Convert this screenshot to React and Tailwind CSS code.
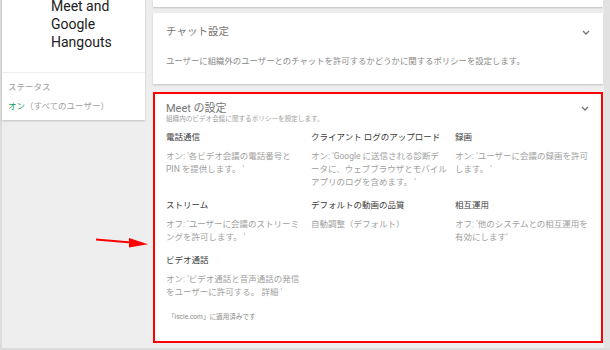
const FONT = "font-['Roboto','Noto_Sans_CJK_JP',sans-serif]";

const SETTINGS = [
  { title: "電話通信", lines: ["オン: '各ビデオ会議の電話番号と", "PIN を提供します。 '"] },
  { title: "クライアント ログのアップロード", lines: ["オン: 'Google に送信される診断デ", "ータに、ウェブブラウザとモバイル", "アプリのログを含めます。 '"] },
  { title: "録画", lines: ["オン: 'ユーザーに会議の録画を許可", "します。 '"] },
  { title: "ストリーム", lines: ["オフ: 'ユーザーに会議のストリーミ", "ングを許可します。 '"] },
  { title: "デフォルトの動画の品質", lines: ["自動調整（デフォルト）"] },
  { title: "相互運用", lines: ["オフ: '他のシステムとの相互運用を", "有効にします'"] },
  { title: "ビデオ通話", lines: ["オン: 'ビデオ通話と音声通話の発信", "をユーザーに許可する。 詳細 '"] },
];

function Chevron() {
  return (
    <svg width="8" height="5" viewBox="0 0 8 5" className="shrink-0">
      <path d="M1 1 L4 4 L7 1" fill="none" stroke="#757575" strokeWidth="1.3" />
    </svg>
  );
}

export default function App() {
  return (
    <div className={`relative w-[610px] h-[350px] overflow-hidden bg-[#eeeeee] ${FONT}`}>
      <div className="flex h-full border-l-2 border-b-2 border-[#dcdcdc]">
        {/* left info card */}
        <div className="w-[143px] shrink-0">
          <div className="-mt-[3px] bg-white shadow-[0_1px_2px_rgba(0,0,0,0.2)]">
            <div className="pl-[49px] pb-[21px] text-[14px] leading-[18px] text-[#212121]">
              <div>Meet and</div>
              <div>Google</div>
              <div>Hangouts</div>
            </div>
            <div className="border-t border-[#eeeeee] px-[6px] pt-[8px] pb-[8px] text-[8.5px] leading-[12px]">
              <div className="text-[#9e9e9e]">ステータス</div>
              <div className="mt-[7px] text-[#9e9e9e]">
                <span className="text-[#0f9d58]">オン</span>（すべてのユーザー）
              </div>
            </div>
          </div>
        </div>

        {/* right column */}
        <div className="ml-[8px] w-[450px] shrink-0 flex flex-col">
          <div className="h-[7px] bg-white shadow-[0_1px_2px_rgba(0,0,0,0.2)]" />

          <div className="mt-[6px] h-[71px] bg-white shadow-[0_1px_2px_rgba(0,0,0,0.2)] pl-[13px] pr-[13px] pt-[12px]">
            <div className="flex items-center justify-between">
              <div className="text-[10.5px] leading-[14px] text-[#757575]">チャット設定</div>
              <Chevron />
            </div>
            <div className="mt-[16px] text-[8.4px] leading-[12px] text-[#8a8a8a] whitespace-nowrap">
              ユーザーに組織外のユーザーとのチャットを許可するかどうかに関するポリシーを設定します。
            </div>
          </div>

          <div className="mt-[8px] h-[251px] bg-white border-2 border-[#ff0000] pl-[11px] pr-[12px] pt-[8px]">
            <div className="flex items-center justify-between">
              <div className="text-[11px] leading-[13px] text-[#757575]">Meet の設定</div>
              <Chevron />
            </div>
            <div className="text-[6.6px] leading-[8px] text-[#9e9e9e]">
              組織内のビデオ会議に関するポリシーを設定します。
            </div>

            <div className="mt-[8px] grid grid-cols-[145px_144px_145px] gap-y-[10px]">
              {SETTINGS.map((s) => (
                <div key={s.title}>
                  <div className="text-[8.5px] leading-[12px] text-[#3a3a3a] whitespace-nowrap">{s.title}</div>
                  <div className="mt-[7px] text-[8.5px] leading-[13px] text-[#a0a0a0] whitespace-nowrap">
                    {s.lines.map((l) => (
                      <div key={l}>{l}</div>
                    ))}
                  </div>
                </div>
              ))}
            </div>

            <div className="mt-[14px] pl-[2px] text-[6.6px] leading-[8px] text-[#8a8a8a]">
              「iscle.com」に適用済みです
            </div>
          </div>
        </div>

        {/* scrollbar strip */}
        <div className="ml-auto w-[6px] bg-[#e2e2e2]" />
      </div>

      {/* annotation arrow */}
      <svg className="absolute left-0 top-0 pointer-events-none" width="610" height="350">
        <line x1="96" y1="239.5" x2="131" y2="242.5" stroke="#ff0000" strokeWidth="2" />
        <polygon points="129,238 148,244.3 129,247.5" fill="#ff0000" />
      </svg>
    </div>
  );
}
